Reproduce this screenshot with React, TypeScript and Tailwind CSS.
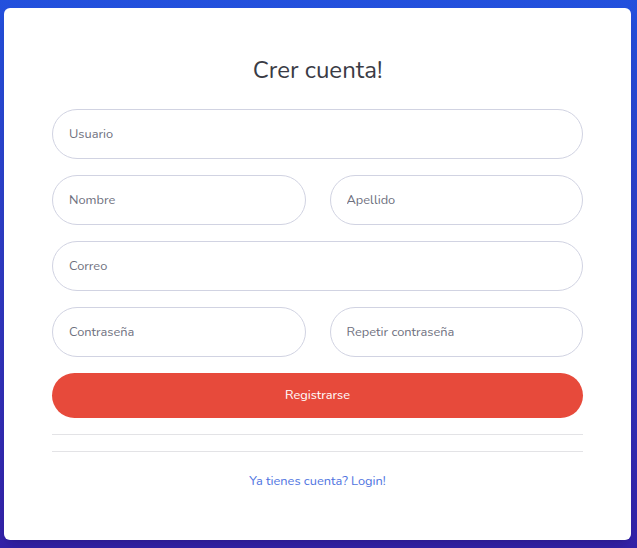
export default function App() {
  const inputCls =
    'w-full h-[50px] rounded-full border border-[#d1d3e2] bg-white px-4 text-[12.8px] text-[#6e707e] placeholder:text-[#6e707e] outline-none'

  return (
    <div
      className="min-h-[548px] bg-gradient-to-b from-[#2250dd] to-[#3321a8] pl-1 pr-[6px] pt-2 pb-2"
      style={{ fontFamily: 'Nunito, Lato, "Noto Sans", sans-serif' }}
    >
      <div className="rounded-md bg-white p-12 shadow-lg">
        <h1 className="mb-6 text-center text-[24px] leading-[29px] text-[#3a3b45]">Crer cuenta!</h1>

        <form className="flex flex-col gap-4" onSubmit={(e) => e.preventDefault()}>
          <input className={inputCls} placeholder="Usuario" />
          <div className="grid grid-cols-2 gap-6">
            <input className={inputCls} placeholder="Nombre" />
            <input className={inputCls} placeholder="Apellido" />
          </div>
          <input className={inputCls} placeholder="Correo" />
          <div className="grid grid-cols-2 gap-6">
            <input className={inputCls} type="password" placeholder="Contraseña" />
            <input className={inputCls} type="password" placeholder="Repetir contraseña" />
          </div>
          <button className="h-[45px] w-full rounded-full bg-[#e74a3b] text-[12.8px] text-white">
            Registrarse
          </button>
        </form>

        <hr className="my-4 border-t border-[#e3e3e6]" />
        <hr className="my-4 border-t border-[#e3e3e6]" />

        <div className="text-center">
          <a href="#" className="text-[12.8px] text-[#4e73df]">
            Ya tienes cuenta? Login!
          </a>
        </div>
      </div>
    </div>
  )
}
